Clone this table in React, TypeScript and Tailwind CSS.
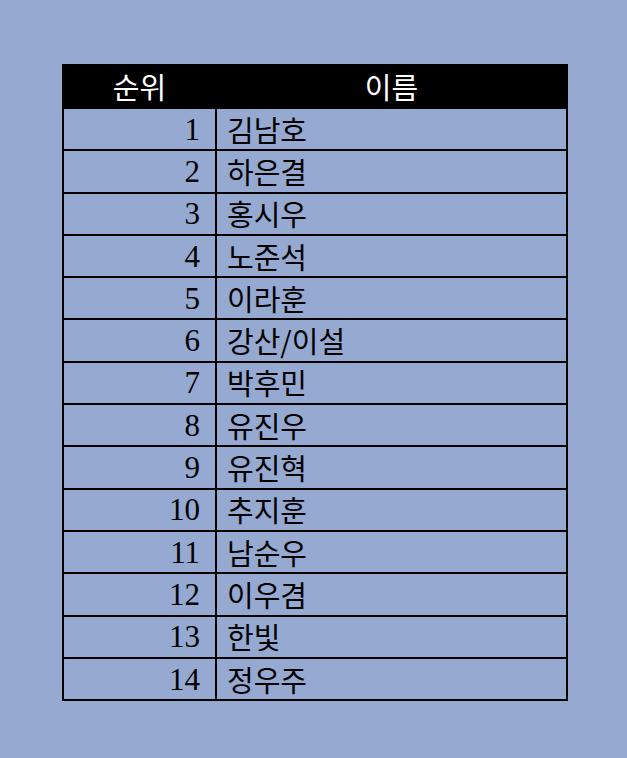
const ranks = [
  "김남호",
  "하은결",
  "홍시우",
  "노준석",
  "이라훈",
  "강산/이설",
  "박후민",
  "유진우",
  "유진혁",
  "추지훈",
  "남순우",
  "이우겸",
  "한빛",
  "정우주",
];

export default function App() {
  return (
    <div className="min-h-[758px] w-full bg-[#95a9d1] pl-[62px] pt-[64px]">
      <table className="w-[506px] border-collapse border-2 border-black">
        <thead>
          <tr className="h-[43px] bg-black text-white">
            <th className="w-[153px] border-2 border-black p-0 text-center text-[29px] font-normal leading-none [font-family:'Noto_Sans_CJK_KR',sans-serif]">
              순위
            </th>
            <th className="border-2 border-black p-0 text-center text-[29px] font-normal leading-none [font-family:'Noto_Sans_CJK_KR',sans-serif]">
              이름
            </th>
          </tr>
        </thead>
        <tbody>
          {ranks.map((name, i) => (
            <tr key={i} className="h-[42.3px] text-black">
              <td className="border-2 border-black p-0 pr-[15px] text-right text-[31px] leading-none [font-family:'Liberation_Serif',serif]">
                {i + 1}
              </td>
              <td className="border-2 border-black p-0 pl-[10px] text-left text-[29px] leading-none [font-family:'Noto_Sans_CJK_KR',sans-serif]">
                {name}
              </td>
            </tr>
          ))}
        </tbody>
      </table>
    </div>
  );
}
